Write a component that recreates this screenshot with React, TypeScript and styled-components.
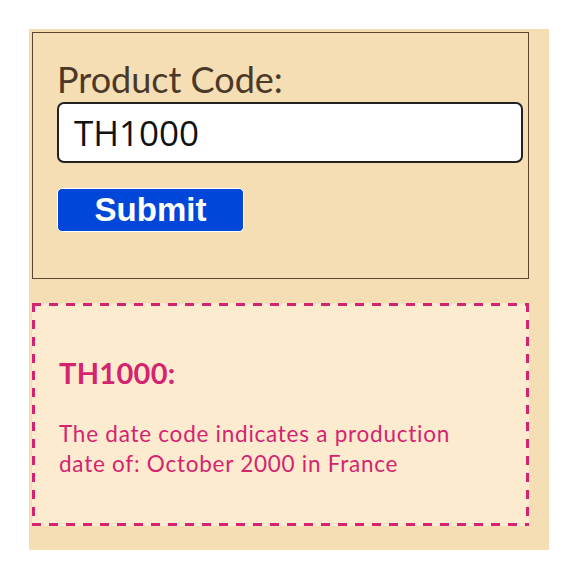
import styled, { createGlobalStyle } from "styled-components";
import React from "react";

const GlobalStyle = createGlobalStyle`
  body {
    margin: 0;
    background: #ffffff;
  }
`;

const PINK = "#d4246f";

const Page = styled.div`
  padding: 29px;
`;

const Panel = styled.div`
  box-sizing: border-box;
  width: 520px;
  height: 521px;
  background: #f5deb3;
  padding: 3px 20px 24px 3px;
  display: flex;
  flex-direction: column;
  gap: 24px;
`;

const FormBox = styled.form`
  box-sizing: border-box;
  height: 247px;
  border: 1px solid #5b4631;
  padding: 25px 6px 0 24px;
  display: flex;
  flex-direction: column;
  align-items: flex-start;
`;

const Label = styled.label`
  font-family: Lato, "Noto Sans", sans-serif;
  font-size: 36px;
  line-height: 42px;
  color: #4a3828;
`;

const CodeInput = styled.input`
  box-sizing: border-box;
  width: 466px;
  height: 61px;
  margin-top: 2px;
  padding: 0 15px;
  border: 2px solid #222;
  border-radius: 7px;
  background: #fff;
  font-family: "Open Sans", "Noto Sans", sans-serif;
  font-size: 35px;
  color: #111;
  outline: none;
`;

const SubmitButton = styled.button`
  box-sizing: border-box;
  width: 187px;
  height: 44px;
  margin-top: 25px;
  padding: 0;
  border: 1px solid #fff;
  border-radius: 5px;
  background: #0047d9;
  color: #fff;
  font-family: "Liberation Sans", Arial, sans-serif;
  font-weight: 700;
  font-size: 33px;
  line-height: 42px;
`;

const dashes = (dir: string) =>
  `repeating-linear-gradient(${dir}, ${PINK} 0 9px, transparent 9px 17px)`;

const ResultBox = styled.div`
  box-sizing: border-box;
  height: 223px;
  background:
    ${dashes("90deg")} left top / 100% 3px no-repeat,
    ${dashes("90deg")} left bottom / 100% 3px no-repeat,
    ${dashes("180deg")} left top / 3px 100% no-repeat,
    ${dashes("180deg")} right top / 3px 100% no-repeat,
    #fdebd0;
  padding: 52px 20px 0 27px;
  color: ${PINK};
  font-family: Lato, "Noto Sans", sans-serif;
`;

const ResultTitle = styled.h2`
  margin: 0;
  font-size: 29px;
  font-weight: 700;
  letter-spacing: 0.3px;
  line-height: 36px;
`;

const ResultText = styled.p`
  margin: 28px 0 0;
  font-size: 22.5px;
  letter-spacing: 0.75px;
  line-height: 30px;
  width: 430px;
`;

export default function App() {
  const [code, setCode] = React.useState("TH1000");
  return (
    <Page>
      <GlobalStyle />
      <Panel>
        <FormBox onSubmit={(e) => e.preventDefault()}>
          <Label htmlFor="code">Product Code:</Label>
          <CodeInput id="code" value={code} onChange={(e) => setCode(e.target.value)} />
          <SubmitButton type="submit">Submit</SubmitButton>
        </FormBox>
        <ResultBox>
          <ResultTitle>TH1000:</ResultTitle>
          <ResultText>
            The date code indicates a production date of: October 2000 in France
          </ResultText>
        </ResultBox>
      </Panel>
    </Page>
  );
}
